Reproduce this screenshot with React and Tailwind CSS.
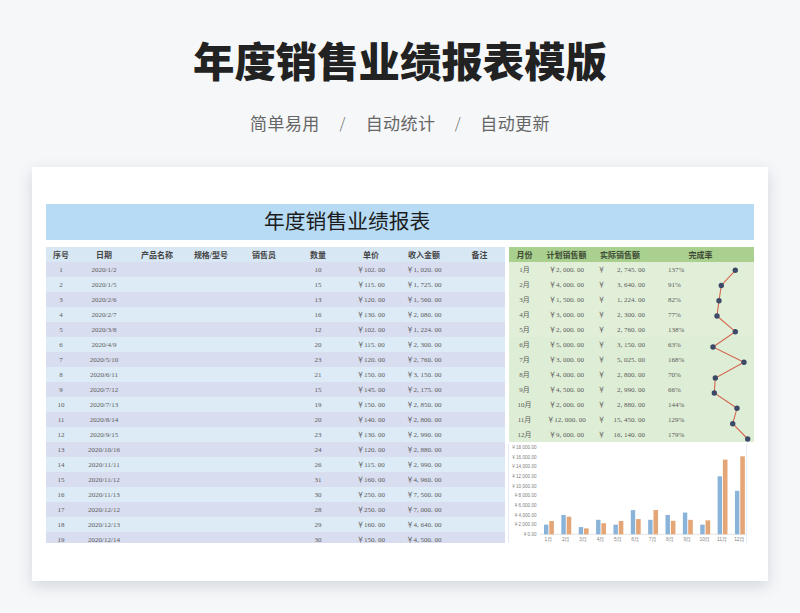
const yuan = (n, space = true) => {
  const s = n.toLocaleString('en-US', { minimumFractionDigits: 2 });
  return space ? s.replace(/,/g, ', ').replace('.', '. ') : s;
};
const sales = [
  [1, '2020/1/2', 10, 102, 1020], [2, '2020/1/5', 15, 115, 1725], [3, '2020/2/6', 13, 120, 1560],
  [4, '2020/2/7', 16, 130, 2080], [5, '2020/3/8', 12, 102, 1224], [6, '2020/4/9', 20, 115, 2300],
  [7, '2020/5/10', 23, 120, 2760], [8, '2020/6/11', 21, 150, 3150], [9, '2020/7/12', 15, 145, 2175],
  [10, '2020/7/13', 19, 150, 2850], [11, '2020/8/14', 20, 140, 2800], [12, '2020/9/15', 23, 130, 2990],
  [13, '2020/10/16', 24, 120, 2880], [14, '2020/11/11', 26, 115, 2990], [15, '2020/11/12', 31, 160, 4960],
  [16, '2020/11/13', 30, 250, 7500], [17, '2020/12/12', 28, 250, 7000], [18, '2020/12/13', 29, 160, 4640],
  [19, '2020/12/14', 30, 150, 4500],
];
const months = [
  ['1月', 2000, 2745, '137%'], ['2月', 4000, 3640, '91%'], ['3月', 1500, 1224, '82%'], ['4月', 3000, 2300, '77%'],
  ['5月', 2000, 2760, '138%'], ['6月', 5000, 3150, '63%'], ['7月', 3000, 5025, '168%'], ['8月', 4000, 2800, '70%'],
  ['9月', 4500, 2990, '66%'], ['10月', 2000, 2880, '144%'], ['11月', 12000, 15450, '129%'], ['12月', 9000, 16140, '179%'],
];
const spark = [[34.3, 23.3], [20.3, 38.5], [18, 53.7], [16, 69], [34.3, 84.7], [12, 100], [43, 115.3], [14.3, 131], [13.3, 146], [36, 161.3], [31.7, 176.7], [46.7, 192]];
const font = "font-['Liberation_Serif','Noto_Sans_CJK_SC',serif]";
const leftCols = 'grid grid-cols-[30px_56px_50px_58px_48px_60px_46px_60px_51px] h-[15px] items-center pt-[2px] text-center';
const rightCols = 'grid grid-cols-[31px_53px_54px_53px_54px] h-[15px] items-center pt-[2px] text-center';

function Chart() {
  const x0 = 31, y0 = 90.3, unit = 87 / 18000, step = 17.36;
  return (
    <svg width="239" height="99" viewBox="0 0 239 99" className="block">
      {[0, 2, 4, 6, 8, 10, 12, 14, 16, 18].map((v) => {
        const y = y0 - v * 1000 * unit;
        return (
          <text key={v} x="27.5" y={y + 1.6} textAnchor="end" fontSize="4.6" fill="#808080" fontFamily="Liberation Sans, Noto Sans CJK SC, sans-serif">
            {v === 0 ? '¥ 0.00' : `¥ ${v},000.00`}
          </text>
        );
      })}
      <line x1={x0} x2="239" y1={y0} y2={y0} stroke="#d4d4d4" strokeWidth="0.6" />
      {months.map(([m, plan, actual], i) => {
        const cx = 39.3 + i * step;
        return (
          <g key={m}>
            <rect x={cx - 4.3} y={y0 - plan * unit} width="4.4" height={plan * unit} fill="#8ab3da" />
            <rect x={cx + 1} y={y0 - actual * unit} width="4.6" height={actual * unit} fill="#e5a677" />
            <text x={cx} y="97" textAnchor="middle" fontSize="4.8" fill="#808080" fontFamily="Liberation Sans, Noto Sans CJK SC, sans-serif">{m}</text>
          </g>
        );
      })}
    </svg>
  );
}

export default function App() {
  return (
    <div className="h-[613px] w-[800px] overflow-hidden bg-[#f5f7f9] font-['Noto_Sans_CJK_SC',sans-serif] antialiased">
      <header className="flex h-[167px] flex-col items-center pt-[38px]">
        <h1 className="text-[41.4px] leading-[42px] font-black text-[#222]">年度销售业绩报表模版</h1>
        <div className="mt-[31px] flex items-center text-[17px] leading-6 tracking-[0.4px] text-[#666]">
          <span>简单易用</span>
          <span className="w-[46px] text-center text-[15px] font-light">/</span>
          <span>自动统计</span>
          <span className="w-[45px] text-center text-[15px] font-light">/</span>
          <span>自动更新</span>
        </div>
      </header>

      <main className="mx-8 h-[414px] bg-white px-3.5 pt-[37px] shadow-[0_5px_14px_rgba(60,70,90,0.18)]">
        <div className="flex h-9 items-center bg-[#b7dbf5] pb-[2px] pl-[218px] text-[20.8px] text-[#1c1c1c]">年度销售业绩报表</div>

        <div className={`mt-[7px] flex gap-1 text-[7px] text-[#5c5c5c] ${font}`}>
          <section className="h-[296px] w-[459px] overflow-hidden">
            <div className={`${leftCols} bg-[#d8e7f4] text-[8px] font-bold text-[#444]`}>
              {['序号', '日期', '产品名称', '规格/型号', '销售员', '数量', '单价', '收入金额', '备注'].map((h) => <div key={h}>{h}</div>)}
            </div>
            {sales.map(([no, date, qty, price, income], i) => (
              <div key={no} className={`${leftCols} ${i % 2 === 0 ? 'bg-[#d8ddef]' : 'bg-[#dcebf6]'}`}>
                <div>{no}</div>
                <div>{date}</div>
                <div />
                <div />
                <div />
                <div>{qty}</div>
                <div>￥{yuan(price)}</div>
                <div>￥{yuan(income)}</div>
                <div />
              </div>
            ))}
          </section>

          <section className="w-[245px]">
            <div className="relative">
              <div className={`${rightCols} bg-[#a9d08e] text-[8px] font-bold text-[#3d4a35]`}>
                <div>月份</div>
                <div>计划销售额</div>
                <div>实际销售额</div>
                <div className="col-span-2">完成率</div>
              </div>
              {months.map(([m, plan, actual, rate], i) => (
                <div key={m} className={`${rightCols} ${i < 5 ? 'bg-[#e1efd9]' : 'bg-[#deedd5]'}`}>
                  <div>{m}</div>
                  <div>￥{yuan(plan)}</div>
                  <div className="flex justify-between pl-[5px] pr-0.5">
                    <span>￥</span>
                    <span>{yuan(actual)}</span>
                  </div>
                  <div className="pl-[21px] text-left">{rate}</div>
                  <div />
                </div>
              ))}
              <svg width="54" height="195" viewBox="0 0 54 195" className="pointer-events-none absolute right-[-1px] top-0">
                <polyline points={spark.map((p) => p.join(',')).join(' ')} fill="none" stroke="#d4654f" strokeWidth="1.1" />
                {spark.map(([x, y]) => <circle key={y} cx={x} cy={y} r="2.7" fill="#3c4a68" />)}
              </svg>
            </div>
            <div className="-ml-px mt-0.5 h-[99px] w-[239px] overflow-hidden border-x border-[#e4ecf5] bg-white">
              <Chart />
            </div>
          </section>
        </div>
      </main>
    </div>
  );
}
